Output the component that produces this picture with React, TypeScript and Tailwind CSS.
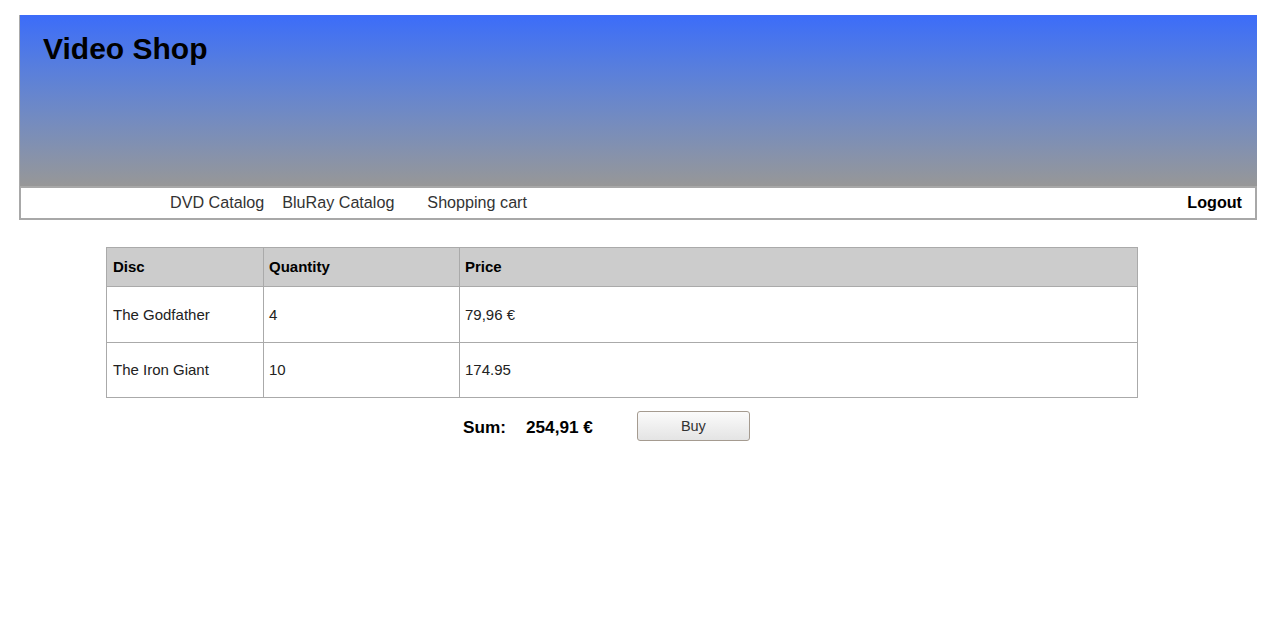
const ROWS = [
  { disc: 'The Godfather', qty: '4', price: '79,96 €', h: 'h-[56px]' },
  { disc: 'The Iron Giant', qty: '10', price: '174.95', h: 'h-[55px]' },
];

export default function App() {
  return (
    <div className="min-h-screen bg-white pt-[15px] font-['Liberation_Sans',Arial,sans-serif] text-[#222]">
      {/* header */}
      <div className="ml-[19px] mr-[23px]">
        <div className="h-[171px] border-l border-[#aaa] bg-gradient-to-b from-[#3c6cf9] to-[#979797] pl-[23px] pt-[16px]">
          <h1 className="text-[30px] font-bold leading-[36px] text-black">Video Shop</h1>
        </div>
        <div className="flex h-[34px] items-center border-2 border-[#a8a8a8] bg-white pb-[2px] pr-[13px] text-[16.15px] text-[#333]">
          <a className="ml-[149px]">DVD Catalog</a>
          <a className="ml-[18px]">BluRay Catalog</a>
          <a className="ml-[33px]">Shopping cart</a>
          <a className="ml-auto font-bold text-black">Logout</a>
        </div>
      </div>

      {/* cart */}
      <div className="ml-[106px] mt-[27px] w-[1032px]">
        <table className="w-full border-collapse text-[15px]">
          <thead>
            <tr className="h-[39px] bg-[#cccccc]">
              <th className="w-[157px] border border-[#aaa] pl-[6px] text-left font-bold text-black">Disc</th>
              <th className="w-[196px] border border-[#aaa] pl-[5px] text-left font-bold text-black">Quantity</th>
              <th className="border border-[#aaa] pl-[5px] text-left font-bold text-black">Price</th>
            </tr>
          </thead>
          <tbody>
            {ROWS.map((r) => (
              <tr key={r.disc} className={r.h}>
                <td className="border border-[#aaa] pl-[6px] pt-[1px]">{r.disc}</td>
                <td className="border border-[#aaa] pl-[5px] pt-[1px]">{r.qty}</td>
                <td className="border border-[#aaa] pl-[5px] pt-[1px]">{r.price}</td>
              </tr>
            ))}
          </tbody>
        </table>
      </div>

      <div className="mt-[13px] flex items-start pl-[463px] text-[17.2px] font-bold text-black">
        <span className="mt-[4px]">Sum:</span>
        <span className="ml-[20px] mt-[4px]">254,91 €</span>
        <button className="ml-[44px] h-[30px] w-[113px] rounded-[3px] border border-[#a59b90] bg-gradient-to-b from-[#fbfbfb] to-[#e4e4e4] pt-[2px] text-[14.5px] font-normal text-[#333]">
          Buy
        </button>
      </div>
    </div>
  );
}
